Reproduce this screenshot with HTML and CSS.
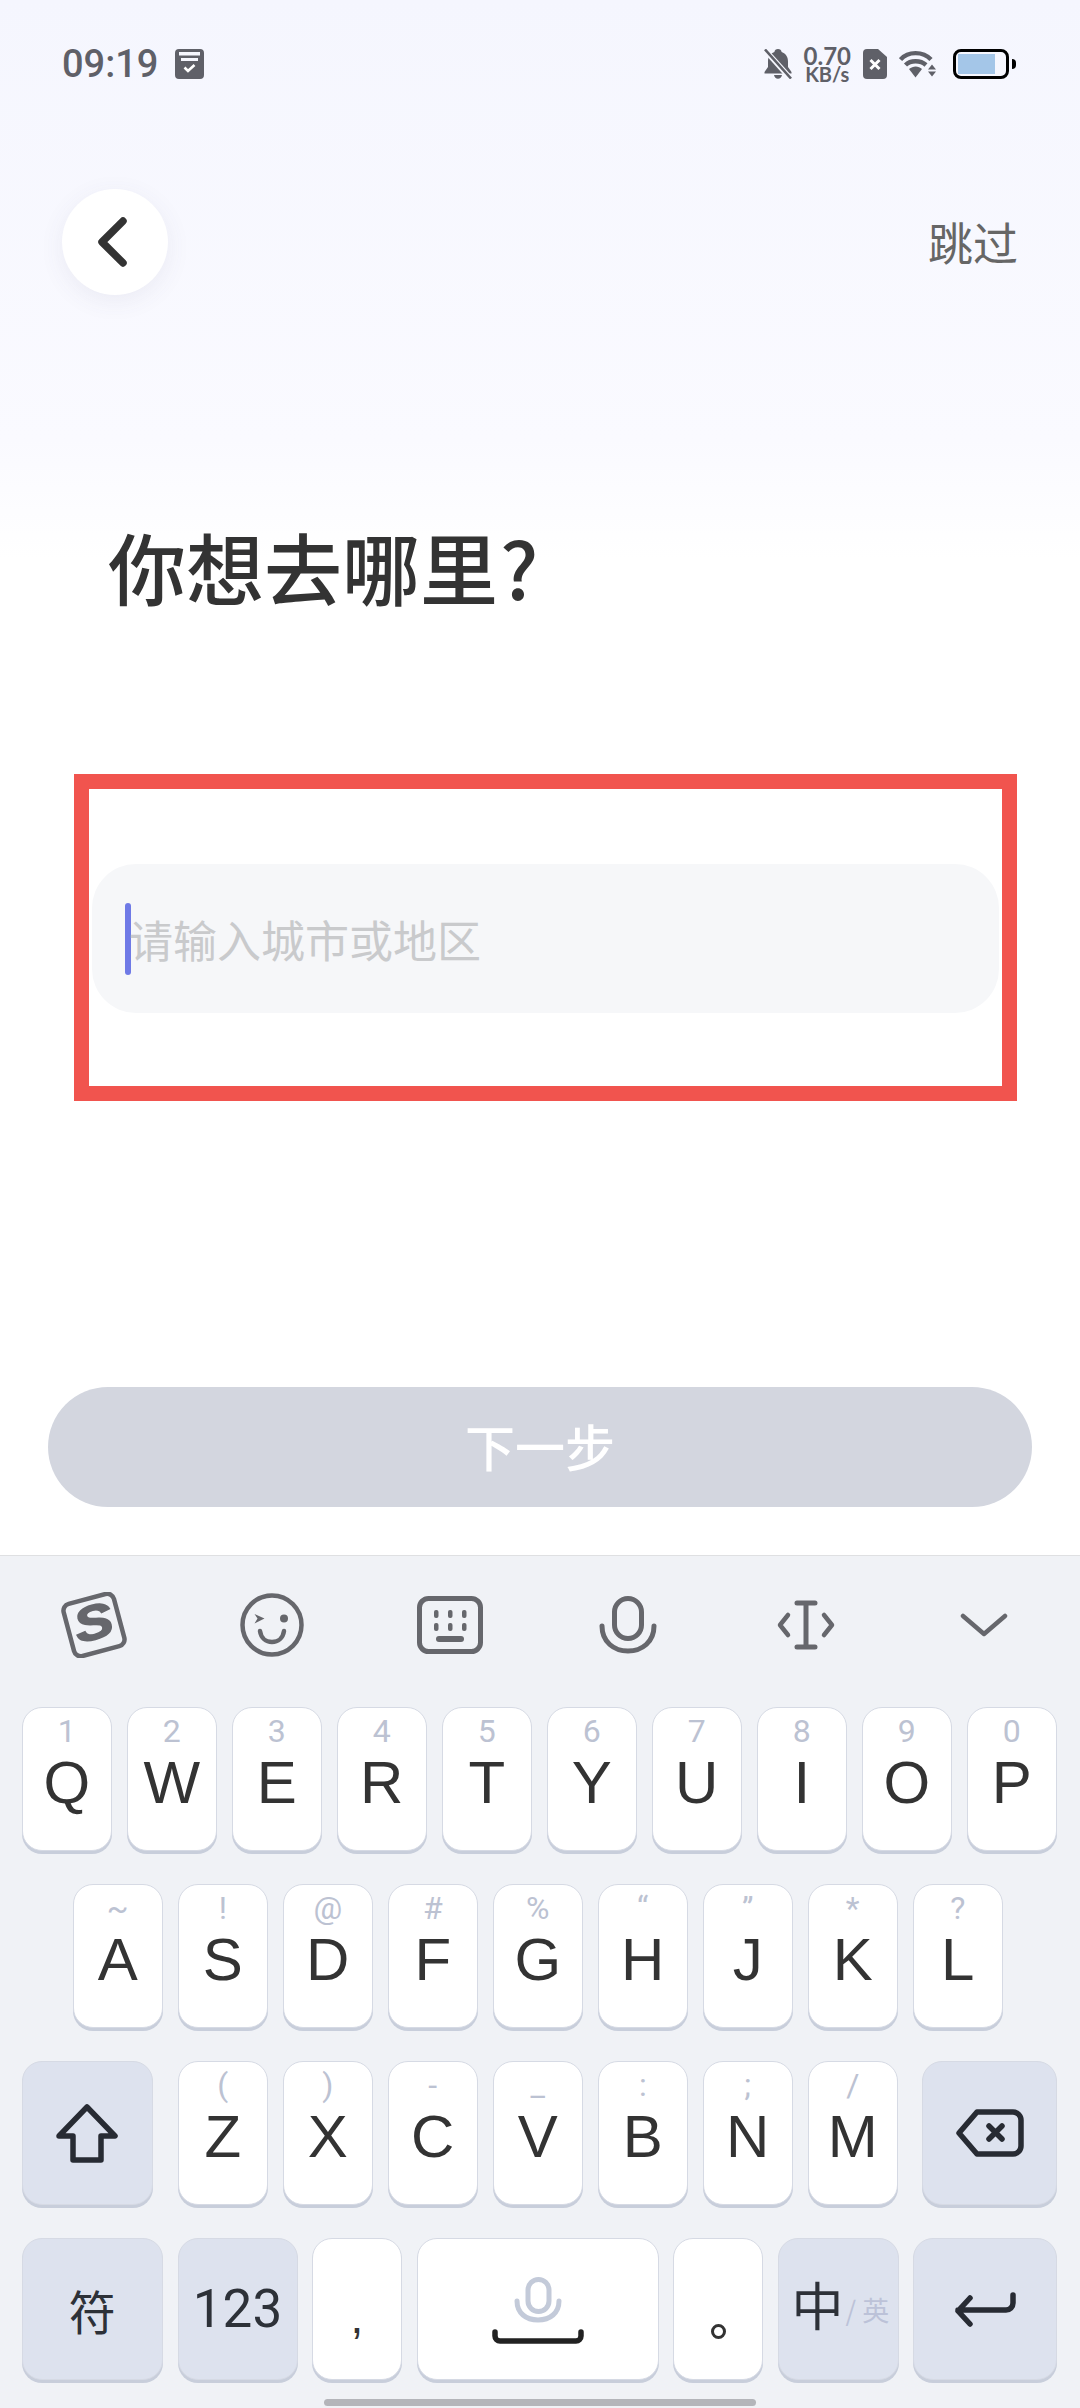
FILE: index.html
```html
<!DOCTYPE html>
<html lang="zh-CN">
<head>
    <meta charset="UTF-8">
    <meta name="viewport" content="width=device-width, initial-scale=1.0">
    <title>你想去哪里</title>
    <link rel="stylesheet" href="styles.css">
</head>
<body>
    <div class="page">
        <!-- Status bar -->
        <div class="status-bar">
            <div class="status-left">
                <span class="clock">09:19</span>
                <svg class="icon-store" width="29" height="30" viewBox="0 0 29 30">
                    <path fill="#5f6068" fill-rule="evenodd" d="M4 0H25a4 4 0 0 1 4 4V26a4 4 0 0 1-4 4H4a4 4 0 0 1-4-4V4a4 4 0 0 1 4-4ZM4 3V6.500H25V3ZM6 9V12H23V9Z"/>
                    <path fill="none" stroke="#fff" stroke-width="2.600" d="M9.500 18.500l3.500 3.500 6.500-6"/>
                </svg>
            </div>
            <div class="status-right">
                <svg width="28" height="30" viewBox="0 0 28 30">
                    <path fill="#5f6068" d="M14 0c2 0 3.400 1.200 3.600 3C22 4.500 24 8 24 12.500V18l3.500 5v1.500H.5V23L4 18v-5.500C4 8 6 4.500 10.400 3 10.600 1.200 12 0 14 0ZM10 26h8c-.4 2.300-2 3.800-4 3.800S10.400 28.300 10 26Z"/>
                    <path stroke="#f6f7fe" stroke-width="5.500" d="M0 0l27 30"/>
                    <path stroke="#5f6068" stroke-width="2.600" d="M1 .5l26 29"/>
                </svg>
                <div class="speed">
                    <span class="speed-num">0.70</span>
                    <span class="speed-unit">KB/s</span>
                </div>
                <svg width="24" height="30" viewBox="0 0 24 30">
                    <path fill="#5f6068" d="M4 0H15l9 8V26a4 4 0 0 1-4 4H4a4 4 0 0 1-4-4V4a4 4 0 0 1 4-4Z"/>
                    <path stroke="#fff" stroke-width="3" d="M7.500 11l9 9M16.500 11l-9 9"/>
                </svg>
                <svg width="37" height="28" viewBox="0 0 37 28">
                    <g fill="none" stroke="#5f6068" stroke-width="4.400">
                        <path d="M1.500 9.500C9 1 24 1 32 9.500"/>
                        <path d="M6.500 15c5-5 15-5 20.500 0"/>
                    </g>
                    <path fill="#5f6068" d="M10 19c4-3.500 9.500-3.500 13 0l-6.500 8.500Z"/>
                    <path fill="#5f6068" d="M33 14.500l4 5h-8ZM29 21.500h8l-4 5Z"/>
                </svg>
                <div class="battery">
                    <div class="battery-body"><div class="battery-fill"></div></div>
                    <div class="battery-cap"></div>
                </div>
            </div>
        </div>

        <!-- Top bar -->
        <div class="top-bar">
            <div class="back-btn">
                <svg width="37" height="60" viewBox="0 0 37 60">
                    <path fill="none" stroke="#333" stroke-width="9" stroke-linecap="round" stroke-linejoin="round" d="M31 5L6 30l25 25"/>
                </svg>
            </div>
            <span class="skip">跳过</span>
        </div>

        <h1 class="title">你想去哪里<span class="title-mark">?</span></h1>

        <div class="input-frame">
            <div class="city-input">
                <span class="caret"></span>
                <span class="placeholder">请输入城市或地区</span>
            </div>
        </div>

        <!-- Keyboard and the button above it -->
        <div class="next-btn">下一步</div>

        <div class="keyboard">
            <div class="toolbar">
                <div class="tool">
                    <svg width="66" height="66" viewBox="0 0 66 66">
                        <g transform="rotate(-15 33 33)">
                            <rect x="7" y="6" width="52" height="54" rx="7" fill="none" stroke="#66676c" stroke-width="4.500"/>
                            <text x="27" y="47" class="logo-s" transform="scale(1.220 1)">S</text>
                        </g>
                    </svg>
                </div>
                <div class="tool">
                    <svg width="64" height="64" viewBox="0 0 64 64">
                        <g fill="none" stroke="#66676c" stroke-width="4.500" stroke-linecap="round">
                            <circle cx="32" cy="32" r="29.500"/>
                            <path d="M20 38c1 7 6 11 12 11s11-4 12-11"/>
                        </g>
                        <path fill="#66676c" d="M14.500 21l10 4.500-10 5 3-5Z"/>
                        <circle cx="44" cy="25.500" r="4" fill="#66676c"/>
                    </svg>
                </div>
                <div class="tool">
                    <svg width="66" height="58" viewBox="0 0 66 58">
                        <rect x="2.500" y="2.500" width="61" height="53" rx="9" fill="none" stroke="#66676c" stroke-width="5"/>
                        <g fill="#66676c">
                            <rect x="17" y="14" width="4.500" height="8" rx="2"/>
                            <rect x="31" y="14" width="4.500" height="8" rx="2"/>
                            <rect x="45" y="14" width="4.500" height="8" rx="2"/>
                            <rect x="17" y="27" width="4.500" height="8" rx="2"/>
                            <rect x="31" y="27" width="4.500" height="8" rx="2"/>
                            <rect x="45" y="27" width="4.500" height="8" rx="2"/>
                            <rect x="19" y="40" width="28" height="6" rx="3"/>
                        </g>
                    </svg>
                </div>
                <div class="tool">
                    <svg width="60" height="58" viewBox="0 0 60 58">
                        <g fill="none" stroke="#66676c" stroke-width="5">
                            <rect x="16.500" y="2.500" width="27" height="40" rx="13.500"/>
                            <path d="M4 30c0 16 12 25 26 25s26-9 26-25" stroke-linecap="round"/>
                        </g>
                    </svg>
                </div>
                <div class="tool">
                    <svg width="60" height="50" viewBox="0 0 60 50">
                        <g fill="none" stroke="#66676c" stroke-width="4.500" stroke-linecap="round" stroke-linejoin="round">
                            <path d="M30 3V47M21 3H39M21 47H39" stroke-width="5"/>
                            <path d="M12 15L4 25l8 10M48 15l8 10-8 10"/>
                        </g>
                    </svg>
                </div>
                <div class="tool">
                    <svg width="48" height="24" viewBox="0 0 48 24">
                        <path fill="none" stroke="#66676c" stroke-width="4.500" stroke-linecap="round" stroke-linejoin="round" d="M3 3l21 18L45 3"/>
                    </svg>
                </div>
            </div>

            <div class="key-row">
                <div class="key"><span class="hint">1</span><span class="letter">Q</span></div>
                <div class="key"><span class="hint">2</span><span class="letter">W</span></div>
                <div class="key"><span class="hint">3</span><span class="letter">E</span></div>
                <div class="key"><span class="hint">4</span><span class="letter">R</span></div>
                <div class="key"><span class="hint">5</span><span class="letter">T</span></div>
                <div class="key"><span class="hint">6</span><span class="letter">Y</span></div>
                <div class="key"><span class="hint">7</span><span class="letter">U</span></div>
                <div class="key"><span class="hint">8</span><span class="letter">I</span></div>
                <div class="key"><span class="hint">9</span><span class="letter">O</span></div>
                <div class="key"><span class="hint">0</span><span class="letter">P</span></div>
            </div>
            <div class="key-row row-home">
                <div class="key"><span class="hint">~</span><span class="letter">A</span></div>
                <div class="key"><span class="hint">!</span><span class="letter">S</span></div>
                <div class="key"><span class="hint">@</span><span class="letter">D</span></div>
                <div class="key"><span class="hint">#</span><span class="letter">F</span></div>
                <div class="key"><span class="hint">%</span><span class="letter">G</span></div>
                <div class="key"><span class="hint">“</span><span class="letter">H</span></div>
                <div class="key"><span class="hint">”</span><span class="letter">J</span></div>
                <div class="key"><span class="hint">*</span><span class="letter">K</span></div>
                <div class="key"><span class="hint">?</span><span class="letter">L</span></div>
            </div>
            <div class="key-row row-shift">
                <div class="key key-fn key-shift">
                    <svg width="62" height="59" viewBox="0 0 62 59">
                        <path fill="none" stroke="#272b33" stroke-width="5.500" stroke-linejoin="round" d="M31 3L59 32H45V56H17V32H3Z"/>
                    </svg>
                </div>
                <div class="letters">
                    <div class="key"><span class="hint">(</span><span class="letter">Z</span></div>
                    <div class="key"><span class="hint">)</span><span class="letter">X</span></div>
                    <div class="key"><span class="hint">-</span><span class="letter">C</span></div>
                    <div class="key"><span class="hint">_</span><span class="letter">V</span></div>
                    <div class="key"><span class="hint">:</span><span class="letter">B</span></div>
                    <div class="key"><span class="hint">;</span><span class="letter">N</span></div>
                    <div class="key"><span class="hint">/</span><span class="letter">M</span></div>
                </div>
                <div class="key key-fn key-del">
                    <svg width="68" height="48" viewBox="0 0 68 48">
                        <g fill="none" stroke="#272b33" stroke-width="5.500" stroke-linecap="round" stroke-linejoin="round">
                            <path d="M21 3H57a8 8 0 0 1 8 8V37a8 8 0 0 1-8 8H21L3 24Z"/>
                            <path d="M33 17l13 13M46 17L33 30"/>
                        </g>
                    </svg>
                </div>
            </div>
            <div class="key-row row-bottom">
                <div class="key key-fn key-sym"><span class="fn-text">符</span></div>
                <div class="key key-fn key-num"><span class="fn-num">123</span></div>
                <div class="key key-punct"><span class="comma">,</span></div>
                <div class="key key-space">
                    <svg width="92" height="68" viewBox="0 0 92 68">
                        <g fill="none" stroke="#c3cad9" stroke-width="5">
                            <rect x="36" y="2.500" width="21" height="32" rx="10.500"/>
                            <path d="M25 24c0 12 9 19 21 19s21-7 21-19" stroke-linecap="round"/>
                        </g>
                        <path fill="none" stroke="#222" stroke-width="5.500" stroke-linecap="round" d="M3 55v4a5 5 0 0 0 5 5H84a5 5 0 0 0 5-5v-4"/>
                    </svg>
                </div>
                <div class="key key-punct"><span class="dot"></span></div>
                <div class="key key-fn key-lang"><span class="lang-main">中</span><span class="lang-sub">/ 英</span></div>
                <div class="key key-fn key-enter">
                    <svg width="62" height="35" viewBox="0 0 62 35">
                        <path fill="none" stroke="#272b33" stroke-width="5.500" stroke-linecap="round" stroke-linejoin="round" d="M59 3V11a7 7 0 0 1-7 7H4M16 6L4 19l12 13"/>
                    </svg>
                </div>
            </div>
            <div class="home-bar"></div>
        </div>
    </div>
</body>
</html>
```

FILE: styles.css
```css
body {
    margin: 0;
    font-family: "Noto Sans CJK SC", "Noto Sans", sans-serif;
    color: #333;
}

.page {
    width: 1080px;
    height: 2408px;
    overflow: hidden;
    display: flex;
    flex-direction: column;
    background: linear-gradient(#f5f6fe 0, #fafaff 440px, #fff 560px);
}

/* Status bar */
.status-bar {
    height: 128px;
    flex-shrink: 0;
    display: flex;
    align-items: center;
    justify-content: space-between;
    padding: 0 64px 0 62px;
}

.status-left,
.status-right {
    display: flex;
    align-items: center;
}

.status-left {
    gap: 17px;
}

.status-right {
    gap: 12px;
}

.clock {
    font-family: Roboto, sans-serif;
    font-size: 38px;
    font-weight: 500;
    color: #5f6068;
    line-height: 30px;
}

.speed {
    display: flex;
    flex-direction: column;
    align-items: center;
    font-family: Lato, sans-serif;
    font-weight: 700;
    color: #5f6068;
}

.speed-num {
    font-size: 24px;
    line-height: 20px;
}

.speed-unit {
    font-size: 20px;
    line-height: 16px;
}

.battery {
    display: flex;
    align-items: center;
    margin-left: 5px;
}

.battery-body {
    width: 56px;
    height: 30px;
    box-sizing: border-box;
    border: 3.5px solid #000;
    border-radius: 8px;
    padding: 2px;
}

.battery-fill {
    width: 37px;
    height: 100%;
    background: #a4c6e8;
}

.battery-cap {
    width: 4px;
    height: 10px;
    margin-left: 3px;
    background: #000;
    border-radius: 0 4px 4px 0;
}

/* Top bar */
.top-bar {
    display: flex;
    align-items: center;
    justify-content: space-between;
    margin-top: 61px;
    padding: 0 62px;
}

.back-btn {
    width: 106px;
    height: 106px;
    border-radius: 50%;
    background: #fff;
    box-shadow: 0 6px 24px rgba(80, 80, 120, 0.08);
    display: flex;
    align-items: center;
    justify-content: center;
}

.back-btn svg {
    width: 31px;
    height: 52px;
    margin-right: 6px;
}

.skip {
    font-size: 45px;
    color: #666;
    line-height: 60px;
}

.title {
    margin: 221px 0 0 108px;
    font-size: 78px;
    font-weight: 500;
    line-height: 100px;
    color: #333;
}

.title-mark {
    margin-left: 2px;
}

/* Red outlined input */
.input-frame {
    margin: 158px 0 0 74px;
    width: 943px;
    box-sizing: border-box;
    border: 15px solid #f1544e;
    padding: 75px 3px 73px;
}

.city-input {
    height: 149px;
    box-sizing: border-box;
    padding-left: 33px;
    display: flex;
    align-items: center;
    background: #f6f7f9;
    border-radius: 44px;
}

.caret {
    width: 6px;
    height: 72px;
    border-radius: 3px;
    background: #6f7ae6;
    flex-shrink: 0;
}

.placeholder {
    margin-left: -2px;
    font-size: 44px;
    color: #c9cacc;
}

/* Next button */
.next-btn {
    margin: auto 48px 48px;
    height: 120px;
    box-sizing: border-box;
    padding-bottom: 4px;
    border-radius: 60px;
    background: #d3d6df;
    color: #fff;
    font-size: 50px;
    font-weight: 500;
    display: flex;
    align-items: center;
    justify-content: center;
}

/* Keyboard */
.keyboard {
    height: 853px;
    box-sizing: border-box;
    flex-shrink: 0;
    border-top: 1px solid #dfe0e2;
    background: #f0f2f6;
    display: flex;
    flex-direction: column;
}

.toolbar {
    height: 151px;
    flex-shrink: 0;
    display: flex;
    padding: 0 7px 0 5px;
}

.tool {
    flex: 1;
    display: flex;
    align-items: center;
    justify-content: center;
    margin-top: -14px;
}

.logo-s {
    font-family: "Liberation Sans", sans-serif;
    font-size: 48px;
    font-weight: 700;
    font-style: italic;
    text-anchor: middle;
    fill: #66676c;
    stroke: #66676c;
    stroke-width: 1.5px;
}

.key-row {
    display: flex;
    gap: 14.5px;
    padding: 0 23px 0 21.5px;
    height: 144px;
    margin-bottom: 33px;
    flex-shrink: 0;
}

.row-home {
    padding: 0 77px 0 72.5px;
}

.row-shift {
    gap: 24.5px;
}

.row-bottom {
    margin-bottom: 0;
    height: 142px;
}

.letters {
    flex: 1;
    display: flex;
    gap: 14.5px;
}

.key {
    flex: 1;
    min-width: 0;
    box-sizing: border-box;
    display: flex;
    flex-direction: column;
    align-items: center;
    background: #fff;
    border: 1px solid #d6dae4;
    border-radius: 20px;
    box-shadow: 0 3px 0 #c8cedb;
}

.hint {
    margin-top: 5px;
    height: 36px;
    font-family: Roboto, sans-serif;
    font-size: 32px;
    line-height: 36px;
    color: #bcc2d2;
}

.letter {
    margin-top: -1px;
    font-family: "Liberation Sans", sans-serif;
    font-size: 60px;
    line-height: 70px;
    color: #333;
}

.key-fn {
    background: #dde2ee;
    justify-content: center;
}

.key-shift {
    flex: 0 0 131.5px;
}

.key-del {
    flex: 0 0 135px;
    margin-left: -0.5px;
}

.key-sym {
    flex: 0 0 141.5px;
}

.key-num {
    flex: 0 0 120px;
}

.key-punct {
    flex: 0 0 90px;
}

.key-space {
    flex: 0 0 242px;
    justify-content: flex-end;
    padding-bottom: 34px;
}

.key-lang {
    flex: 0 0 121px;
    flex-direction: row;
    align-items: center;
    justify-content: flex-start;
    padding: 0 0 10px 13px;
}

.key-enter {
    flex: 1;
}

.fn-text {
    font-size: 47px;
    color: #2d3138;
}

.fn-num {
    font-family: Roboto, sans-serif;
    font-size: 53px;
    color: #2d3138;
}

.comma {
    margin-top: 48px;
    font-family: "Liberation Sans", sans-serif;
    font-size: 46px;
    line-height: 60px;
    color: #333;
}

.dot {
    width: 15px;
    height: 15px;
    box-sizing: border-box;
    margin-top: 85px;
    border: 3px solid #333;
    border-radius: 50%;
}

.lang-main {
    font-size: 52px;
    line-height: 60px;
    color: #2d3138;
}

.lang-sub {
    margin: 12px 0 0 2px;
    font-size: 27px;
    line-height: 40px;
    color: #bcc2d8;
    white-space: nowrap;
}

.home-bar {
    width: 432px;
    height: 7px;
    margin: 19px auto 0;
    border-radius: 4px;
    background: #b4b5ba;
    flex-shrink: 0;
}
```
